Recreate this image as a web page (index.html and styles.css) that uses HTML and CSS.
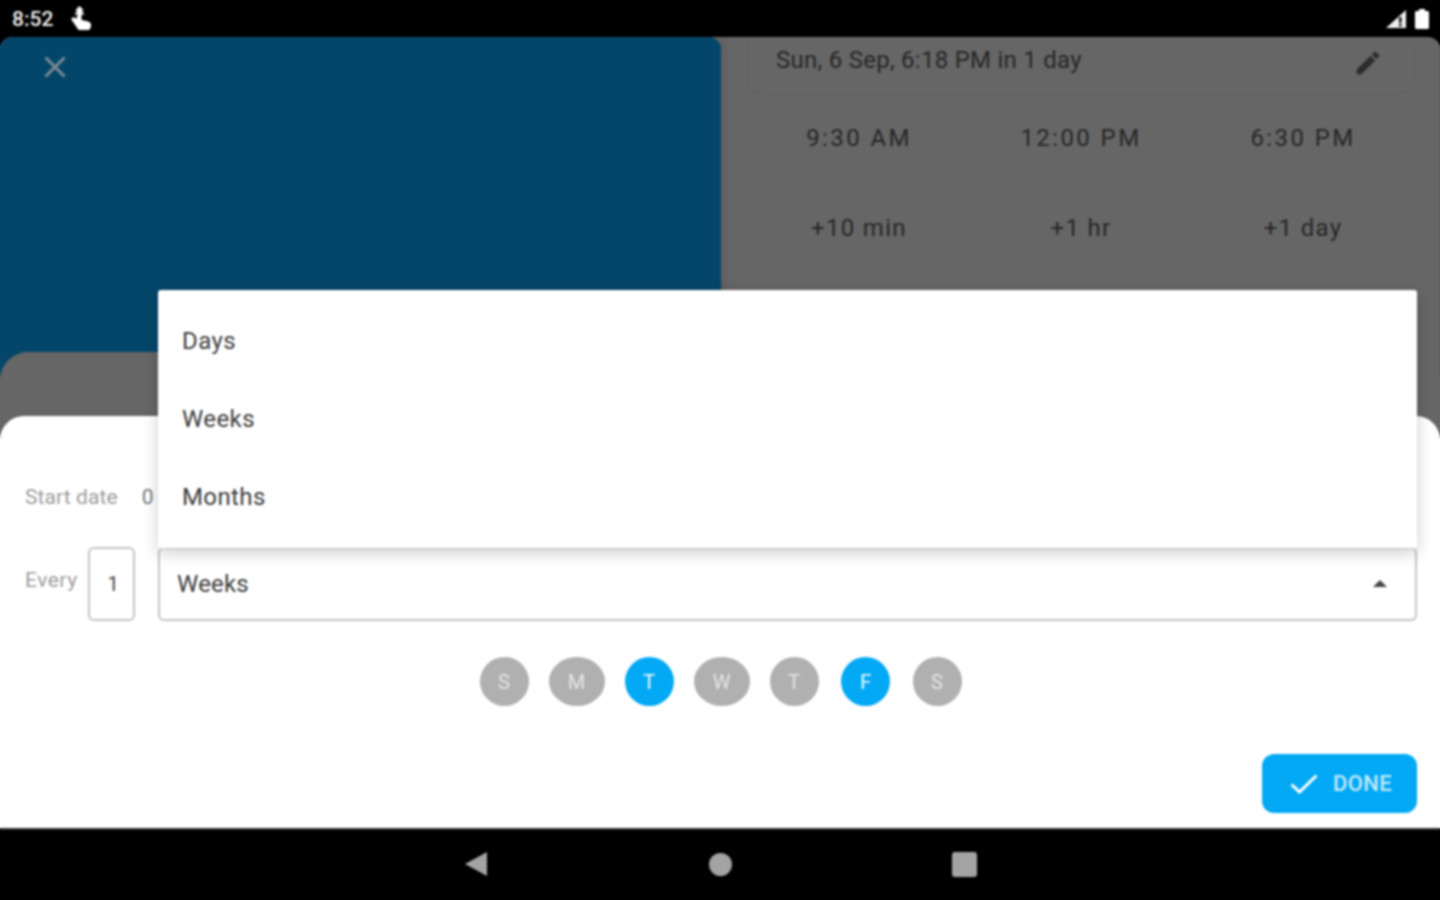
FILE: index.html
```html
<!DOCTYPE html>
<html lang="en">
<head>
    <meta charset="UTF-8">
    <title>Reminder</title>
    <link rel="stylesheet" href="styles.css">
</head>
<body>
    <div class="device">
        <div class="status-bar">
            <div class="status-left">
                <span class="clock">8:52</span>
                <svg class="hand" width="20" height="24" viewBox="0 0 20 24">
                    <path d="M8.500 0l4.500 4.500h-2.500l3 4h-3v2.500h-4v-2.500h-3l3-4h-2.500z" fill="#fff"/>
                    <path d="M0 13l2.500-2 3 2v-2.500h5v3.500l5 1c2.500.5 4.500 1.500 4.500 3.500v1c0 3-2 5.500-5 5.500h-4.500c-2 0-3-1-4-2.500z" fill="#fff"/>
                </svg>
            </div>
            <div class="status-right">
                <svg width="20" height="18" viewBox="0 0 20 18">
                    <path d="M20 0v18h-20z" fill="#eee"/>
                    <path d="M13 7h2.500v6h-2.500zM13 14h2.500v2.500h-2.500z" fill="#111"/>
                </svg>
                <svg width="14" height="20" viewBox="0 0 14 20">
                    <path d="M4 0h6v2h2.500c.8 0 1.500.7 1.500 1.500v15c0 .8-.7 1.500-1.500 1.500h-11c-.8 0-1.500-.7-1.500-1.500v-15c0-.8.7-1.500 1.500-1.500h2.500z" fill="#fff"/>
                </svg>
            </div>
        </div>

        <div class="screen">
            <div class="top-panes">
                <div class="left-pane">
                    <svg class="close-icon" width="22" height="22" viewBox="0 0 22 22">
                        <path d="M1.500 1.500l19 19M20.500 1.500l-19 19" stroke="#7b8a92" stroke-width="3" fill="none"/>
                    </svg>
                </div>
                <div class="right-pane">
                    <div class="date-card">
                        <span>Sun, 6 Sep, 6:18 PM in 1 day</span>
                        <svg class="pencil" width="30" height="30" viewBox="0 0 24 24">
                            <path d="M3 17.250V21h3.750L17.810 9.940l-3.750-3.750zM20.710 7.040a1 1 0 0 0 0-1.410l-2.340-2.340a1 1 0 0 0-1.410 0l-1.830 1.830 3.750 3.750z" fill="#2d2d2d"/>
                        </svg>
                    </div>
                    <div class="quick-grid">
                        <div>9:30 AM</div>
                        <div>12:00 PM</div>
                        <div>6:30 PM</div>
                        <div class="tight">+10 min</div>
                        <div class="tight">+1 hr</div>
                        <div class="tight">+1 day</div>
                    </div>
                </div>
            </div>

            <div class="back-sheet"></div>

            <div class="sheet">
                <div class="start-row">
                    <span class="field-label">Start date</span>
                    <span class="start-value">0</span>
                </div>
                <div class="every-row">
                    <span class="field-label every-label">Every</span>
                    <div class="count-box">1</div>
                    <div class="unit-select">
                        <span>Weeks</span>
                        <span class="caret"></span>
                    </div>
                </div>
                <div class="day-row">
                    <div class="day">S</div>
                    <div class="day wide">M</div>
                    <div class="day on">T</div>
                    <div class="day wide">W</div>
                    <div class="day">T</div>
                    <div class="day on far">F</div>
                    <div class="day far">S</div>
                </div>
                <div class="action-row">
                    <div class="done-btn">
                        <svg width="28" height="20" viewBox="0 0 28 20">
                            <path d="M1.500 10.500l8 7.500 17-16.500" stroke="#fff" stroke-width="3" fill="none"/>
                        </svg>
                        <span>DONE</span>
                    </div>
                </div>
            </div>

            <div class="menu">
                <div class="menu-item">Days</div>
                <div class="menu-item">Weeks</div>
                <div class="menu-item">Months</div>
            </div>
        </div>

        <div class="nav-bar">
            <svg width="24" height="26" viewBox="0 0 24 26"><path d="M23 1v24L1 13z" fill="#a3a3a3"/></svg>
            <div class="nav-circle"></div>
            <div class="nav-square"></div>
        </div>
    </div>
</body>
</html>
```

FILE: styles.css
```css
* {
    box-sizing: border-box;
}
html, body {
    margin: 0;
    height: 100%;
    background: #000;
}
body {
    font-family: Roboto, "Liberation Sans", sans-serif;
    overflow: hidden;
}
.device {
    position: relative;
    width: 1440px;
    height: 900px;
    display: flex;
    flex-direction: column;
}
/* soft layer over everything, the capture is an upscaled one */
.device::after {
    content: "";
    position: absolute;
    inset: 0;
    backdrop-filter: blur(0.8px);
    pointer-events: none;
}

/* status bar */
.status-bar {
    height: 37px;
    display: flex;
    justify-content: space-between;
    align-items: center;
    padding: 0 11px 0 12px;
    color: #f2f2f2;
}
.status-left, .status-right {
    display: flex;
    align-items: center;
}
.clock {
    font-size: 21px;
    font-weight: 500;
}
.hand {
    margin-left: 18px;
    margin-top: -1px;
}
.status-right {
    gap: 9px;
}

/* main screen */
.screen {
    position: relative;
    height: 791px;
    background: #666;
    border-radius: 12px 12px 0 0;
    overflow: hidden;
}
.top-panes {
    display: flex;
    height: 100%;
}
.left-pane {
    width: 721px;
    background: #04466a;
    border-radius: 0 12px 0 0;
    padding: 19px 0 0 44px;
}
.close-icon {
    display: block;
}
.right-pane {
    flex: 1;
    padding: 0 25px 0 26px;
    color: #262626;
    box-shadow: inset 8px 0 6px -4px #5e5e5e, inset -10px 0 0 -9px #5c5c5c;
}
.date-card {
    height: 57px;
    padding: 0 30px 10px 28px;
    display: flex;
    justify-content: space-between;
    align-items: center;
    font-size: 24px;
    letter-spacing: 0.260px;
    border: 1px solid #616161;
    border-top: none;
    border-radius: 0 0 14px 14px;
}
.pencil {
    display: block;
    margin: 6px 1px 0 0;
}
.quick-grid {
    display: grid;
    grid-template-columns: repeat(3, 222px);
    grid-auto-rows: 90px;
    margin-top: -1px;
    padding-left: 1px;
    font-size: 24px;
    letter-spacing: 2.400px;
    text-align: center;
}
.quick-grid div {
    display: flex;
    align-items: center;
    justify-content: center;
}
.quick-grid .tight {
    letter-spacing: 1.300px;
}

/* bottom sheets */
.back-sheet {
    position: absolute;
    left: 0;
    right: 0;
    top: 315px;
    bottom: 0;
    background: #666;
    border-radius: 28px 28px 0 0;
}
.sheet {
    position: absolute;
    left: 0;
    right: 0;
    top: 379px;
    bottom: 0;
    background: #fff;
    border-radius: 24px 24px 0 0;
    padding: 61px 23px 15px 25px;
}
.start-row {
    height: 40px;
    display: flex;
    align-items: center;
}
.field-label {
    font-size: 21px;
    letter-spacing: 0.100px;
    color: #9c9c9c;
}
.start-value {
    margin-left: 24px;
    font-size: 21px;
    color: #777;
}
.every-row {
    margin-top: 30px;
    height: 74px;
    display: flex;
    align-items: center;
}
.every-label {
    width: 63px;
    margin-bottom: 8px;
    letter-spacing: 0.500px;
}
.count-box {
    width: 47px;
    height: 74px;
    padding-left: 3px;
    display: flex;
    align-items: center;
    justify-content: center;
    border: 2px solid #c4c4c4;
    border-radius: 6px;
    font-size: 20px;
    color: #444;
}
.unit-select {
    flex: 1;
    height: 74px;
    margin-left: 23px;
    padding: 0 28px 0 17px;
    display: flex;
    align-items: center;
    justify-content: space-between;
    border: 2px solid #c4c4c4;
    border-top-color: #e2e2e2;
    border-radius: 6px;
    font-size: 24px;
    letter-spacing: 0.200px;
    color: #3c3c3c;
}
.caret {
    width: 0;
    height: 0;
    border-left: 7px solid transparent;
    border-right: 7px solid transparent;
    border-bottom: 7px solid #444;
    margin-bottom: 2px;
}
.day-row {
    margin-top: 36px;
    display: flex;
    justify-content: center;
    gap: 20px;
    padding-right: 1px;
}
.day {
    width: 49px;
    height: 49px;
    border-radius: 50%;
    background: #b0b0b0;
    color: #e4e4e4;
    font-size: 20px;
    display: flex;
    align-items: center;
    justify-content: center;
}
.day.wide {
    width: 56px;
}
.day.far {
    margin-left: 2.500px;
}
.day.on {
    background: #03a9f4;
    color: #f2fbff;
}
.action-row {
    margin-top: 48px;
    display: flex;
    justify-content: flex-end;
}
.done-btn {
    width: 155px;
    height: 59px;
    display: flex;
    align-items: center;
    gap: 15px;
    padding-left: 28px;
    background: #03a9f4;
    border-radius: 12px;
    color: #c4e9fb;
    font-size: 22px;
    font-weight: 500;
    letter-spacing: 0.400px;
}

/* dropdown */
.menu {
    position: absolute;
    left: 158px;
    top: 253px;
    width: 1259px;
    padding: 12px 0;
    background: #fff;
    border-radius: 3px;
    box-shadow: 0 5px 16px rgba(0, 0, 0, 0.2);
}
.menu-item {
    height: 78px;
    padding-left: 24px;
    display: flex;
    align-items: center;
    font-size: 24px;
    letter-spacing: 0.400px;
    color: #3c3c3c;
}

/* nav bar */
.nav-bar {
    height: 72px;
    display: grid;
    grid-template-columns: 24px 24px 26px;
    column-gap: 220px;
    justify-content: center;
    align-items: center;
    padding: 0 0 2px 1px;
    border-top: 2px solid #333;
}
.nav-bar svg {
    display: block;
}
.nav-circle {
    width: 23px;
    height: 23px;
    margin-left: 1px;
    border-radius: 50%;
    background: #a3a3a3;
}
.nav-square {
    width: 25px;
    height: 25px;
    border-radius: 3px;
    background: #a3a3a3;
}
```
